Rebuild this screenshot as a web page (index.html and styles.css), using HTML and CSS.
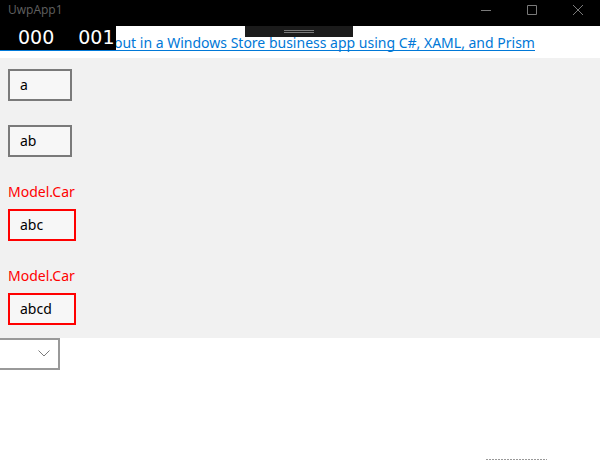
FILE: index.html
```html
<!DOCTYPE html>
<html lang="en">
<head>
<meta charset="utf-8">
<title>UwpApp1</title>
<link rel="stylesheet" href="styles.css">
</head>
<body>
<header class="titlebar">
  <span class="title">UwpApp1</span>
  <div class="window-buttons">
    <button type="button" aria-label="Minimize"><svg width="10" height="10" viewBox="0 0 10 10"><path d="M0 5.5H10"/></svg></button>
    <button type="button" aria-label="Maximize"><svg width="10" height="10" viewBox="0 0 10 10"><path d="M.5 .5H9.5V9.5H.5Z"/></svg></button>
    <button type="button" aria-label="Close"><svg width="10" height="10" viewBox="0 0 10 10"><path d="M0 0L10 10M10 0L0 10"/></svg></button>
  </div>
</header>
<div class="counters"><span>000</span><span>001</span></div>
<button type="button" class="handle" aria-label="Expand toolbar"><svg width="30" height="3" viewBox="0 0 30 3"><path d="M0 .5H30M0 2.5H30"/></svg></button>
<main>
  <div class="link-row"><a href="#">out in a Windows Store business app using C#, XAML, and Prism</a></div>
  <form class="form">
    <div class="field"><input type="text" value="a" aria-label="First value"></div>
    <div class="field"><input type="text" value="ab" aria-label="Second value"></div>
    <div class="field invalid"><label for="third">Model.Car</label><input type="text" id="third" value="abc"></div>
    <div class="field invalid"><label for="fourth">Model.Car</label><input type="text" id="fourth" value="abcd"></div>
  </form>
  <div class="picker">
    <select aria-label="Car"><option></option></select>
    <svg class="chevron" width="12" height="7" viewBox="0 0 12 7"><path d="M.5 .5L6 6L11.5 .5"/></svg>
  </div>
</main>
<div class="dashes"></div>
</body>
</html>
```
FILE: styles.css
```css
* { box-sizing: border-box; }
body {
  margin: 0;
  min-height: 100vh;
  display: flex;
  flex-direction: column;
  position: relative;
  overflow: hidden;
  background: #fff;
  color: #000;
  font: 14px/20px "Noto Sans", "Open Sans", sans-serif;
}
main { flex: 1; }
button { border: 0; padding: 0; background: none; font: inherit; }
svg { display: block; fill: none; stroke: #7a7a7a; stroke-width: 1; }
.titlebar {
  display: flex;
  justify-content: space-between;
  height: 26px;
  padding-left: 8px;
  background: #000;
}
.title { color: #606060; font: 12px/20px "Open Sans", sans-serif; }
.window-buttons { display: flex; height: 20px; margin-right: -1px; }
.window-buttons button { width: 46px; display: grid; place-items: center; }
.counters {
  position: absolute;
  left: 0;
  top: 26px;
  width: 116px;
  height: 24px;
  padding-left: 18px;
  display: flex;
  gap: 24px;
  background: #000;
  color: #fff;
  font: 19px/22px "DejaVu Sans", sans-serif;
}
.handle {
  position: absolute;
  left: 245px;
  top: 26px;
  width: 108px;
  height: 11px;
  display: grid;
  place-items: center;
  background: #1b1b1b;
}
.link-row { display: flex; height: 32px; padding-top: 7px; }
.link-row a {
  height: 18px;
  padding-left: 114px;
  border-bottom: 1px solid #0078d7;
  color: #0078d7;
  line-height: 20px;
  text-decoration: none;
  white-space: nowrap;
}
.form {
  display: flex;
  flex-direction: column;
  align-items: flex-start;
  gap: 24px;
  padding: 11px 8px 13px;
  background: #f1f1f1;
}
.field { display: flex; flex-direction: column; }
.field label { height: 28px; color: #f00; line-height: 22px; }
.field input {
  width: 64px;
  height: 32px;
  border: 2px solid #7a7a7a;
  padding: 0 10px 2px;
  background: #f7f7f7;
  color: #000;
  font: inherit;
}
.field.invalid input { width: 68px; border-color: #f00; }
.picker { position: relative; width: 60px; }
.picker select {
  display: block;
  width: 100%;
  height: 32px;
  appearance: none;
  border: 2px solid #999;
  border-left: 0;
  border-radius: 0;
  background: #fff;
}
.chevron { position: absolute; right: 10px; top: 12px; pointer-events: none; }
.dashes {
  align-self: flex-end;
  width: 61px;
  height: 1px;
  margin-right: 53px;
  background: repeating-linear-gradient(90deg, #999 0 2px, #fff 2px 3px);
}
```
